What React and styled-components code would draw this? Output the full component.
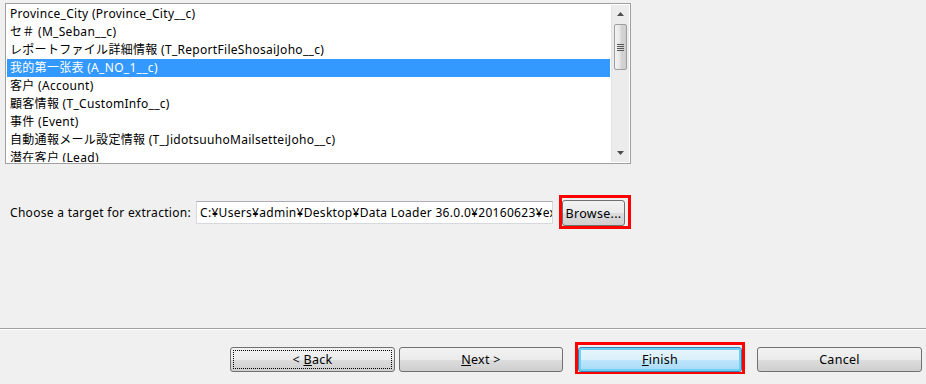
import React from "react";
import styled, { createGlobalStyle, css } from "styled-components";

const Global = createGlobalStyle`
  html, body { margin: 0; padding: 0; background: #f0f0f0; }
  body {
    font-family: "Noto Sans", "Noto Sans CJK JP", sans-serif;
    font-size: 12px;
    letter-spacing: 0.3px;
    color: #000;
  }
`;

const Page = styled.div`
  width: 926px;
  height: 384px;
  background: #f0f0f0;
  display: flex;
  flex-direction: column;
  overflow: hidden;
`;

const ListBox = styled.div`
  margin: 3px 0 0 5px;
  width: 626px;
  height: 161px;
  box-sizing: border-box;
  border: 1px solid #a0a0a0;
  background: #fff;
  display: flex;
  padding: 1px;
  overflow: hidden;
`;

const Items = styled.div`
  flex: 1;
  overflow: hidden;
`;

const Item = styled.div`
  height: 18px;
  line-height: 18px;
  padding-left: 3px;
  white-space: nowrap;
  ${(p) =>
    p.$selected &&
    css`
      background: #3399ff;
      color: #fff;
    `}
`;

const ScrollBar = styled.div`
  width: 17px;
  margin-left: 1px;
  background: #ececec;
  border-left: 1px solid #e3e3e3;
  display: flex;
  flex-direction: column;
  align-items: center;
`;

const Arrow = styled.div`
  height: 18px;
  width: 100%;
  display: flex;
  align-items: center;
  justify-content: center;
`;

const Thumb = styled.div`
  width: 13px;
  height: 46px;
  margin-top: 1px;
  box-sizing: border-box;
  border: 1px solid #9e9e9e;
  border-radius: 2px;
  background: linear-gradient(to right, #f4f4f4 0%, #e6e6e6 45%, #d4d4d4 55%, #cfcfcf 100%);
  display: flex;
  align-items: center;
  justify-content: center;
`;

const Track = styled.div`
  flex: 1;
`;

const TargetRow = styled.div`
  margin: 31px 0 0 10px;
  display: flex;
  align-items: center;
  height: 34px;
`;

const Label = styled.span`
  width: 186px;
  flex: none;
  white-space: nowrap;
`;

const PathInput = styled.div`
  width: 357px;
  height: 23px;
  flex: none;
  box-sizing: border-box;
  border: 1px solid #d5d8dd;
  border-top-color: #abadb3;
  background: #fff;
  line-height: 21px;
  padding-left: 3px;
  white-space: nowrap;
  overflow: hidden;
`;

const RedFrame = styled.div`
  flex: none;
  border: 3px solid #ff0000;
  display: flex;
  margin-left: ${(p) => p.$ml || 0}px;
  padding: ${(p) => p.$pad || "0"};
  ${(p) =>
    p.$thinBottom &&
    css`
      border-bottom-width: 2px;
    `}
`;

const Button = styled.div`
  box-sizing: border-box;
  flex: none;
  width: ${(p) => p.$w}px;
  height: ${(p) => p.$h || 25}px;
  margin-top: ${(p) => p.$mt || 0}px;
  border: 1px solid #707070;
  border-radius: 3px;
  background: linear-gradient(to bottom, #f2f2f2 0%, #ebebeb 50%, #dddddd 51%, #cfcfcf 100%);
  display: flex;
  align-items: center;
  justify-content: center;
  position: relative;
  white-space: nowrap;
  font-size: 12.5px;
  ${(p) =>
    p.$default &&
    css`
      border-color: #3c7fb1;
      background: linear-gradient(to bottom, #eaf6fd 0%, #d9f0fc 50%, #bee6fd 51%, #a7d9f5 100%);
      box-shadow: inset 0 0 0 2px #6fd0f5;
    `}
  ${(p) =>
    p.$focus &&
    css`
      &::after {
        content: "";
        position: absolute;
        inset: 2px;
        border: 1px dotted #000;
      }
    `}
`;

const Separator = styled.div`
  margin-top: 99px;
  height: 1px;
  background: #a0a0a0;
  border-bottom: 1px solid #ffffff;
`;

const ButtonRow = styled.div`
  display: flex;
  align-items: flex-start;
  margin-top: 12px;
  padding-left: 230px;
`;

const Gap = styled.div`
  width: ${(p) => p.$w}px;
  flex: none;
`;

const U = styled.span`
  text-decoration: underline;
`;

const items = [
  "Province_City (Province_City__c)",
  "セ＃ (M_Seban__c)",
  "レポートファイル詳細情報 (T_ReportFileShosaiJoho__c)",
  "我的第一张表 (A_NO_1__c)",
  "客户 (Account)",
  "顧客情報 (T_CustomInfo__c)",
  "事件 (Event)",
  "自動通報メール設定情報 (T_JidotsuuhoMailsetteiJoho__c)",
  "潜在客户 (Lead)",
];

export default function App() {
  return (
    <Page>
      <Global />
      <ListBox>
        <Items>
          {items.map((t, i) => (
            <Item key={i} $selected={i === 3}>
              {t}
            </Item>
          ))}
        </Items>
        <ScrollBar>
          <Arrow>
            <svg width="7" height="4" viewBox="0 0 7 4">
              <path d="M3.5 0 L7 4 L0 4 Z" fill="#4d4d4d" />
            </svg>
          </Arrow>
          <Thumb>
            <svg width="7" height="7" viewBox="0 0 7 7">
              <rect x="0" y="0" width="7" height="1" fill="#555" />
              <rect x="0" y="2" width="7" height="1" fill="#555" />
              <rect x="0" y="4" width="7" height="1" fill="#555" />
              <rect x="0" y="6" width="7" height="1" fill="#555" />
            </svg>
          </Thumb>
          <Track />
          <Arrow>
            <svg width="7" height="4" viewBox="0 0 7 4">
              <path d="M0 0 L7 0 L3.5 4 Z" fill="#4d4d4d" />
            </svg>
          </Arrow>
        </ScrollBar>
      </ListBox>

      <TargetRow>
        <Label>Choose a target for extraction:</Label>
        <PathInput>C:¥Users¥admin¥Desktop¥Data Loader 36.0.0¥20160623¥ex</PathInput>
        <RedFrame $ml={6} $pad="2px 3px 0 0">
          <Button $w={63} $h={26}>Browse...</Button>
        </RedFrame>
      </TargetRow>

      <Separator />

      <ButtonRow>
        <Button $w={165} $mt={5} $focus>
          &lt;&nbsp;<U>B</U>ack
        </Button>
        <Gap $w={4} />
        <Button $w={164} $mt={5}>
          <U>N</U>ext &gt;
        </Button>
        <Gap $w={12} />
        <RedFrame $pad="2px 0 0 0" $thinBottom>
          <Button $w={164} $default>
            <U>F</U>inish
          </Button>
        </RedFrame>
        <Gap $w={12} />
        <Button $w={165} $mt={5}>Cancel</Button>
      </ButtonRow>
    </Page>
  );
}
